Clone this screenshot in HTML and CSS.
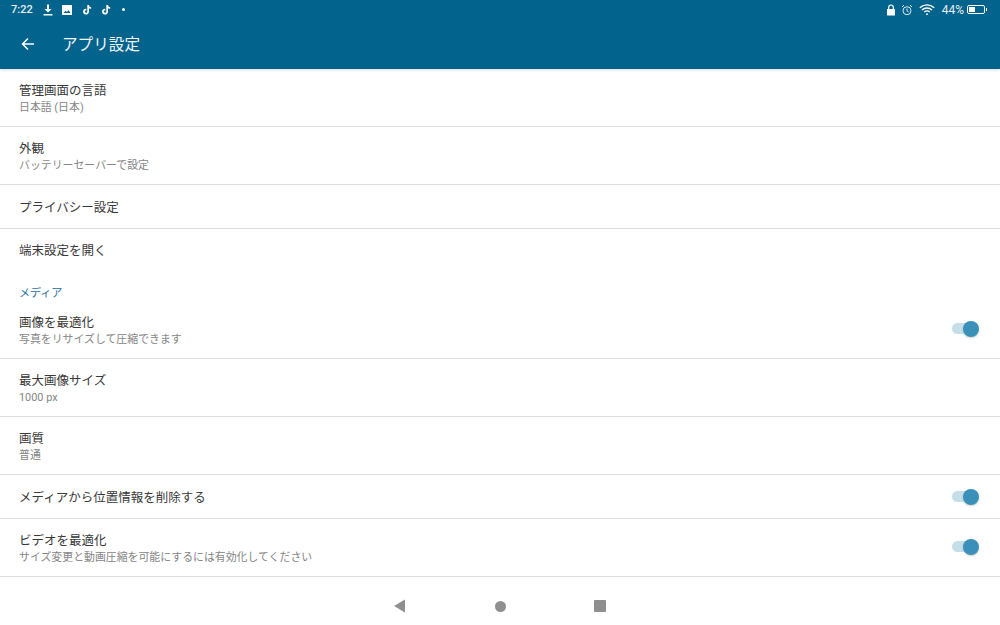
FILE: index.html
```html
<!DOCTYPE html>
<html lang="ja">
<head>
<meta charset="utf-8">
<title>アプリ設定</title>
<link rel="stylesheet" href="styles.css">
</head>
<body>
<div class="screen">
  <header class="top">
    <div class="status">
      <div class="status-left">
        <span class="time">7:22</span>
        <svg class="si" viewBox="0 0 12 12"><path d="M5 0.5h2v4.5h2.6L6 8.6 2.4 5H5zM1.5 10h9v1.4h-9z" fill="#fff"/></svg>
        <svg class="si" viewBox="0 0 12 12"><path fill-rule="evenodd" d="M1.5 1h9a.5.5 0 0 1 .5.5v9a.5.5 0 0 1-.5.5h-9a.5.5 0 0 1-.5-.5v-9a.5.5 0 0 1 .5-.5zM2.5 9h7L7.6 6.2 6 8 4.6 6.8z" fill="#fff"/></svg>
        <svg class="si" viewBox="0 0 12 12"><path d="M6.300 1h1.700c.1 1.200.9 2 2.100 2.100v1.700c-.8 0-1.500-.2-2.100-.6v3.200c0 1.900-1.400 3.100-3.100 3.100S2 9.200 2 7.500s1.500-3 3.300-2.800v1.800c-.8-.2-1.500.3-1.500 1s.6 1.200 1.300 1.200 1.200-.5 1.200-1.300z" fill="#fff"/></svg>
        <svg class="si" viewBox="0 0 12 12"><path d="M6.300 1h1.700c.1 1.200.9 2 2.100 2.100v1.700c-.8 0-1.500-.2-2.100-.6v3.200c0 1.900-1.400 3.100-3.100 3.100S2 9.200 2 7.500s1.500-3 3.300-2.800v1.800c-.8-.2-1.500.3-1.500 1s.6 1.200 1.300 1.200 1.200-.5 1.200-1.300z" fill="#fff"/></svg>
        <span class="dot"></span>
      </div>
      <div class="status-right">
        <svg class="lock" viewBox="0 0 12 12"><path d="M2 5h8v6.500H2z" fill="#fff"/><path d="M3.700 5.500V3.300a2.300 2.300 0 0 1 4.600 0v2.200" fill="none" stroke="#fff" stroke-width="1.200"/></svg>
        <svg class="alarm" viewBox="0 0 12 12" fill="none" stroke="#dfe9ef" stroke-width="1"><circle cx="6" cy="6.700" r="4"/><path d="M6 4.500v2.400l1.600 1M1 2.900 3 1.200M11 2.900 9 1.200"/></svg>
        <svg class="wifi" viewBox="0 0 16 12" fill="none" stroke="#fff" stroke-width="1.300"><path d="M.8 4.200a10.400 10.400 0 0 1 14.400 0M3 6.500a7.200 7.200 0 0 1 10 0M5.200 8.600a4 4 0 0 1 5.600 0"/><circle cx="8" cy="10.700" r=".9" fill="#fff" stroke="none"/></svg>
        <span class="pct">44%</span>
        <span class="battery"><span class="battery-fill"></span></span>
      </div>
    </div>
    <div class="toolbar">
      <svg class="back" viewBox="0 0 16 16" fill="none" stroke="#fff" stroke-width="1.500"><path d="M14 8H2.500M8 2.500 2.500 8 8 13.500"/></svg>
      <h1 class="title">アプリ設定</h1>
    </div>
  </header>

  <main class="list">
    <div class="row tall line"><div class="t">管理画面の言語</div><div class="s">日本語 (日本)</div></div>
    <div class="row tall line"><div class="t">外観</div><div class="s">バッテリーセーバーで設定</div></div>
    <div class="row short line"><div class="t">プライバシー設定</div></div>
    <div class="row short"><div class="t">端末設定を開く</div></div>
    <div class="section">メディア</div>
    <div class="row tall line switchrow">
      <div><div class="t">画像を最適化</div><div class="s">写真をリサイズして圧縮できます</div></div>
      <span class="switch"><span class="knob"></span></span>
    </div>
    <div class="row tall line"><div class="t">最大画像サイズ</div><div class="s">1000 px</div></div>
    <div class="row tall line"><div class="t">画質</div><div class="s">普通</div></div>
    <div class="row short line switchrow">
      <div class="t">メディアから位置情報を削除する</div>
      <span class="switch"><span class="knob"></span></span>
    </div>
    <div class="row tall line switchrow">
      <div><div class="t">ビデオを最適化</div><div class="s">サイズ変更と動画圧縮を可能にするには有効化してください</div></div>
      <span class="switch"><span class="knob"></span></span>
    </div>
  </main>

  <nav class="nav">
    <svg class="nav-back" viewBox="0 0 12 14"><path d="M11 .5v13L0 7z" fill="#8f8f8f"/></svg>
    <span class="nav-home"></span>
    <span class="nav-recent"></span>
  </nav>
</div>
</body>
</html>
```
FILE: styles.css
```css
* { box-sizing: border-box; }
html, body { margin: 0; padding: 0; }
body {
  width: 1000px;
  height: 625px;
  overflow: hidden;
  background: #fff;
  font-family: "Roboto", "Noto Sans CJK JP", sans-serif;
}
.screen { display: flex; flex-direction: column; height: 625px; }
.top {
  height: 69px;
  flex: none;
  background: #02638c;
  color: #fff;
  box-shadow: 0 1px 3px rgba(0,0,0,.14);
  position: relative;
}
.status {
  height: 19px;
  padding: 0 13px 0 11px;
  display: flex;
  justify-content: space-between;
  align-items: center;
}
.status-left, .status-right { display: flex; align-items: center; }
.time { font-size: 11px; font-weight: 500; color: #e6eef2; width: 31px; }
.si { width: 12px; height: 12px; margin-right: 7.300px; }
.dot { width: 3px; height: 3px; border-radius: 50%; background: #fff; margin-left: 3px; }
.lock { width: 12px; height: 12px; margin-right: 4px; }
.alarm { width: 12px; height: 12px; margin-right: 6px; }
.wifi { width: 16px; height: 13px; margin-right: 7px; }
.pct { font-size: 12px; font-weight: 400; color: #e6eef2; margin-right: 3px; }
.battery {
  width: 18px;
  height: 9px;
  border: 1.500px solid #fff;
  border-radius: 2px;
  position: relative;
  padding: 1px;
  display: flex;
  margin-right: 2px;
}
.battery::after {
  content: "";
  position: absolute;
  right: -3px;
  top: 1.500px;
  width: 1.500px;
  height: 3px;
  background: #fff;
}
.battery-fill { width: 44%; background: #fff; }
.toolbar {
  height: 49px;
  display: flex;
  align-items: center;
  padding-left: 20px;
}
.back { width: 16px; height: 16px; margin-right: 27px; }
.title { margin: -2px 0 0 -1px; font-size: 15.600px; font-weight: 400; color: #f1f5f8; }
.list { flex: 1; display: flex; flex-direction: column; }
.row {
  padding: 0 21px 0 19px;
  display: flex;
  flex-direction: column;
  justify-content: center;
  flex: none;
}
.tall { height: 58px; padding-top: 3px; }
.short { height: 44px; }
.short.line { padding-top: 2px; }
.line { border-bottom: 1px solid #dedede; }
.switchrow { flex-direction: row; align-items: center; justify-content: space-between; }
.t { font-size: 12.500px; line-height: 16px; color: #383838; }
.s { font-size: 10.900px; line-height: 16px; margin-top: 1px; color: #858585; }
.section {
  height: 28px;
  flex: none;
  padding: 13px 0 0 19px;
  font-size: 11px;
  line-height: 16px;
  color: #1f6fa5;
}
.switch {
  width: 26px;
  height: 11px;
  border-radius: 6px;
  background: #c5deea;
  position: relative;
  flex: none;
  margin-right: 1px;
  margin-top: -2px;
}
.tall .switch { margin-top: -5px; }
.knob {
  position: absolute;
  right: -1px;
  top: -2.500px;
  width: 16px;
  height: 16px;
  border-radius: 50%;
  background: #3a90b8;
  box-shadow: 0 1px 2px rgba(0,0,0,.2);
}
.nav {
  height: 48px;
  flex: none;
  display: flex;
  align-items: center;
  justify-content: center;
  gap: 88px;
  padding-top: 10px;
}
.nav-back { width: 12px; height: 14px; }
.nav-home { width: 11px; height: 11px; border-radius: 50%; background: #8f8f8f; margin-left: 1px; }
.nav-recent { width: 12px; height: 12px; border-radius: 1px; background: #8f8f8f; }
```
